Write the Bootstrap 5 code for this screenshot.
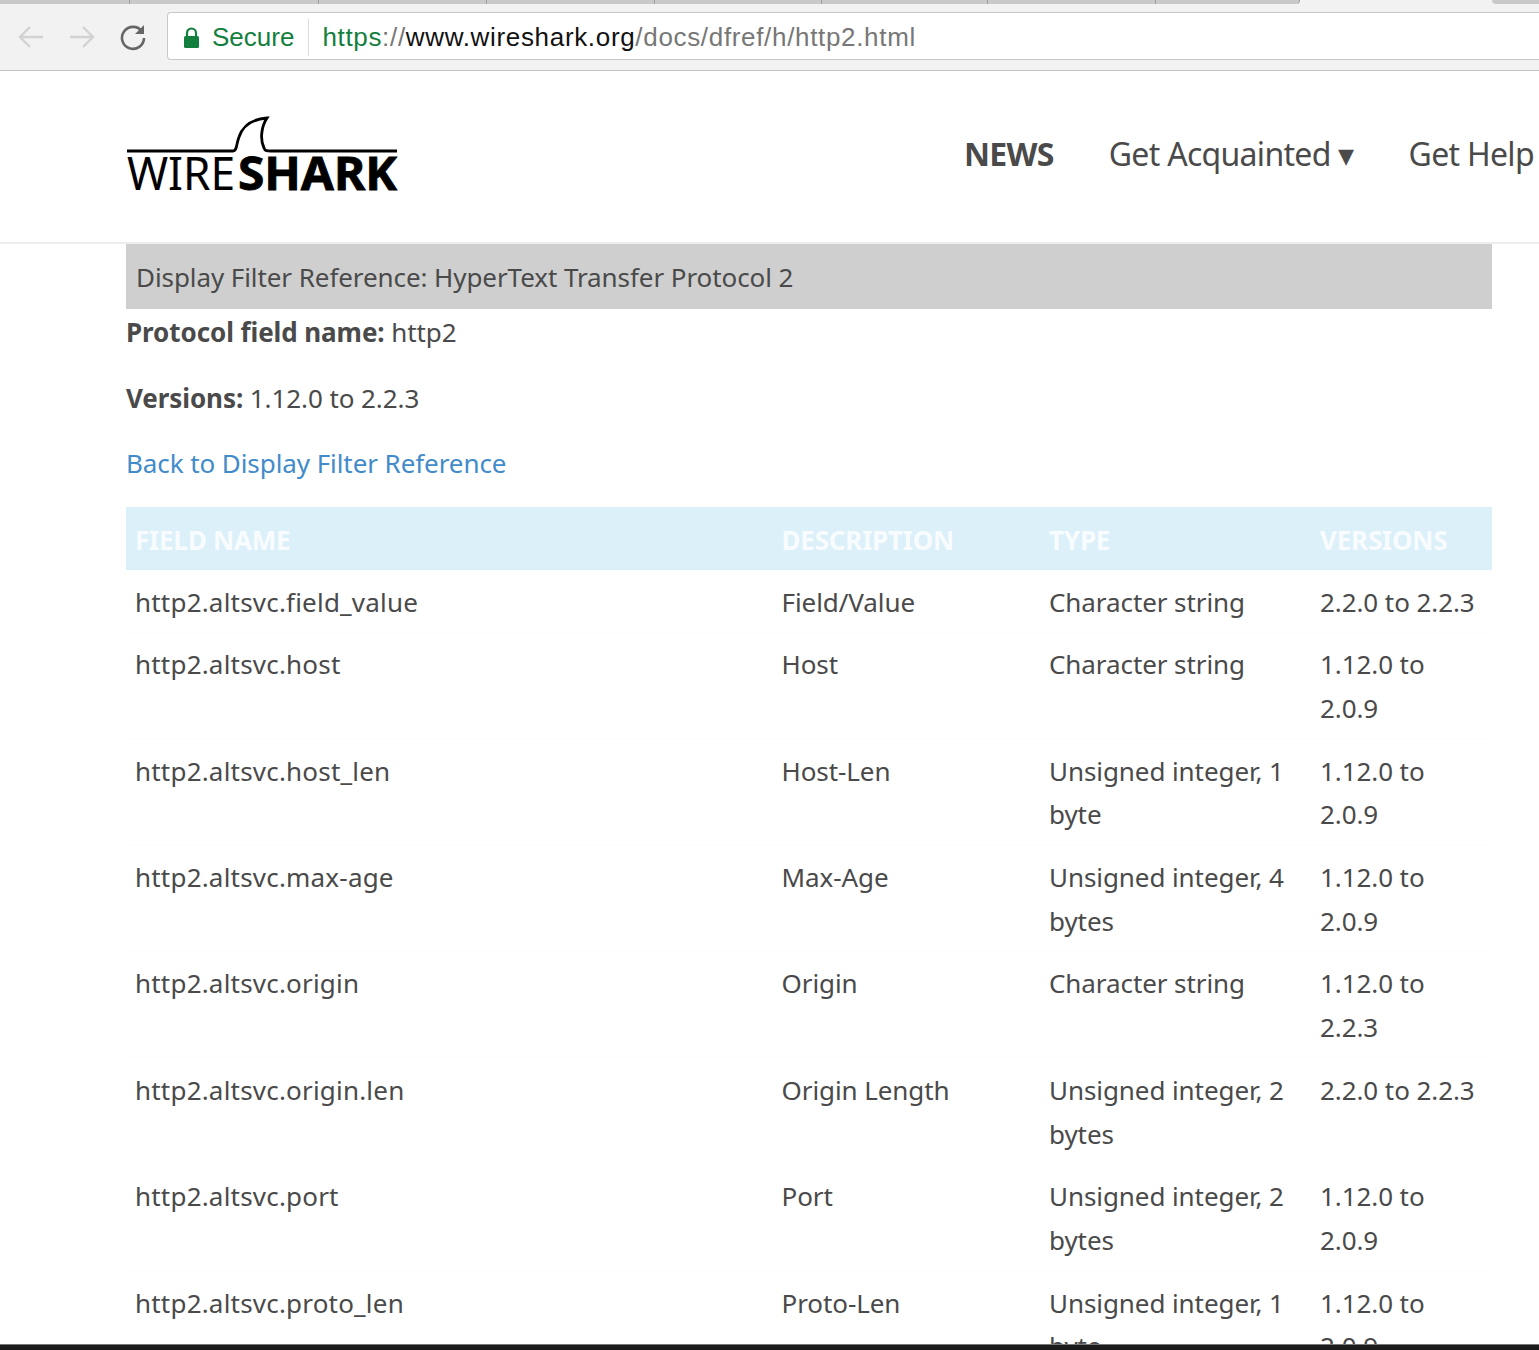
<!doctype html>
<html lang="en"><head><meta charset="utf-8"><title>Wireshark</title>
<link href="https://cdn.jsdelivr.net/npm/bootstrap@5.3.0/dist/css/bootstrap.min.css" rel="stylesheet">
<style>
html,body{height:1350px;overflow:hidden}
body{font-family:"Noto Sans","Open Sans",sans-serif;color:#4a4a4a;background:#fff;font-size:26px;letter-spacing:-.08px;position:relative}
.tabstrip{height:12px;background:#f2f2f2}
.tabitem{height:4px;background:#c9c9c9;border-right:1px solid #9c9c9c}
.t1{width:130px}.t2{width:189px}.t3{width:168px}.t4{width:168px}.t5{width:167px}.t6{width:166px}.t7{width:168px}.t8{width:144px;border-radius:0 0 5px 0}.t9{width:192px;background:#f2f2f2;border:0}.t10{width:47px;border:0;border-radius:0 0 0 5px}
.toolbar{height:59px;background:#f2f2f2;border-bottom:1px solid #c4c4c4;font-family:"Liberation Sans",sans-serif;letter-spacing:0}
.navicons{width:167px;padding:0 0 9px 17px;gap:23px}
.addr{height:48px;background:#fff;border:1px solid #c8c8c8;border-right:0;border-radius:4px 0 0 4px;font-size:26px;padding:3px 0 0 15px}
.secure{color:#137f3e;padding-right:14px;border-right:1px solid #ddd;height:37px;gap:12px}
.urltext{padding-left:13px;color:#777;letter-spacing:.67px}
.urlg{color:#137f3e}.urlb{color:#111}
.sitehead{height:173px;border-bottom:2px solid #ededed;padding-left:126px}
.logo{width:276px;height:90px;margin-top:44px}
.sitenav{margin-left:562px;margin-top:59px;gap:55px;font-size:32px;white-space:nowrap;height:48px;line-height:48px;letter-spacing:-.7px}
.sitenav a{color:#4a4a4a;text-decoration:none}
.sitenav .nw{font-weight:700}
.main{padding:0 47px 0 126px}
.titlebar{height:65px;background:#cfcfcf;padding:0 10px;line-height:67px;letter-spacing:-.08px}
.fieldline{margin:0;height:66px;line-height:47px}
.fieldline a{color:#428bca;text-decoration:none}
.linkline{line-height:45px}
.filtertable{table-layout:fixed;width:1366px;margin:0;--bs-table-color:#4a4a4a;--bs-table-bg:transparent}
.filtertable th,.filtertable td{padding:10.5px 9px 7.5px;line-height:43.7px;border-bottom:1px solid #fcfdfa;vertical-align:top}
.filtertable thead th{background:#dcf0f9;color:#f8fcfe;font-weight:700;text-transform:uppercase;height:63px;border:0;padding-top:12px;padding-bottom:7px;letter-spacing:-.2px}
.filtertable td.fname{letter-spacing:.2px}
.c1{width:646.5px}.c2{width:267.5px}.c3{width:271px}.c4{width:181px}
.bottomstrip{position:absolute;left:0;right:0;top:1344px;height:6px;background:#1c1c1c;border-top:1px solid #777}
</style></head><body>
<div class="tabstrip d-flex">
<div class="tabitem t1"></div><div class="tabitem t2"></div><div class="tabitem t3"></div><div class="tabitem t4"></div><div class="tabitem t5"></div><div class="tabitem t6"></div><div class="tabitem t7"></div><div class="tabitem t8"></div><div class="tabitem t9"></div><div class="tabitem t10"></div>
</div>
<div class="toolbar d-flex">
<div class="navicons d-flex align-items-center">
<svg width="28" height="26" viewBox="0 0 28 26" fill="none" stroke="#d2d2d2" stroke-width="2.4"><path d="M26 13H3M13 3 3 13l10 10"/></svg>
<svg width="28" height="26" viewBox="0 0 28 26" fill="none" stroke="#d2d2d2" stroke-width="2.4"><path d="M2 13h23M15 3l10 10-10 10"/></svg>
<svg width="28" height="28" viewBox="0 0 28 28" fill="none" stroke="#666" stroke-width="2.6"><path d="M23 8.500A11 11 0 1 0 25 15"/><path d="M25 2v9h-9" fill="#666" stroke="none"/></svg>
</div>
<div class="addr flex-grow-1 d-flex align-items-center">
<div class="secure d-flex align-items-center">
<svg width="17" height="22" viewBox="0 0 17 22"><path d="M4 9V6a4.500 4.500 0 0 1 9 0v3" fill="none" stroke="#137f3e" stroke-width="2.200"/><rect x="1" y="9" width="15" height="12" rx="1.500" fill="#137f3e"/></svg>
<span>Secure</span></div>
<div class="urltext"><span class="urlg">https</span>://<span class="urlb">www.wireshark.org</span>/docs/dfref/h/http2.html</div>
</div>
</div>
<header class="sitehead d-flex">
<svg class="logo flex-shrink-0" viewBox="0 0 276 90">
<path d="M1 36H107C111 36 110 30 113 22 117 10 128 4 141 3 135 12 134 25 138 33 139 36 141 36 145 36H271" fill="none" stroke="#000" stroke-width="2.800"/>
<text x="1" y="75" font-family="Noto Sans" font-size="46" textLength="108" lengthAdjust="spacingAndGlyphs" fill="#000">WIRE</text>
<text x="112" y="75" font-family="Noto Sans" font-weight="700" font-size="46" textLength="159" lengthAdjust="spacingAndGlyphs" fill="#000" stroke="#000" stroke-width=".8">SHARK</text>
</svg>
<nav class="sitenav d-flex"><a class="nw" href="#">NEWS</a><a href="#">Get Acquainted ▾</a><a href="#">Get Help</a></nav>
</header>
<main class="main">
<div class="titlebar">Display Filter Reference: HyperText Transfer Protocol 2</div>
<p class="fieldline"><b>Protocol field name:</b> http2</p>
<p class="fieldline"><b>Versions:</b> 1.12.0 to 2.2.3</p>
<p class="fieldline linkline"><a href="#">Back to Display Filter Reference</a></p>
<table class="table filtertable">
<thead><tr><th class="c1">Field Name</th><th class="c2">Description</th><th class="c3">Type</th><th class="c4">Versions</th></tr></thead>
<tbody>
<tr><td class="fname">http2.altsvc.field_value</td><td>Field/Value</td><td>Character string</td><td>2.2.0 to 2.2.3</td></tr>
<tr><td class="fname">http2.altsvc.host</td><td>Host</td><td>Character string</td><td>1.12.0 to 2.0.9</td></tr>
<tr><td class="fname">http2.altsvc.host_len</td><td>Host-Len</td><td>Unsigned integer, 1 byte</td><td>1.12.0 to 2.0.9</td></tr>
<tr><td class="fname">http2.altsvc.max-age</td><td>Max-Age</td><td>Unsigned integer, 4 bytes</td><td>1.12.0 to 2.0.9</td></tr>
<tr><td class="fname">http2.altsvc.origin</td><td>Origin</td><td>Character string</td><td>1.12.0 to 2.2.3</td></tr>
<tr><td class="fname">http2.altsvc.origin.len</td><td>Origin Length</td><td>Unsigned integer, 2 bytes</td><td>2.2.0 to 2.2.3</td></tr>
<tr><td class="fname">http2.altsvc.port</td><td>Port</td><td>Unsigned integer, 2 bytes</td><td>1.12.0 to 2.0.9</td></tr>
<tr><td class="fname">http2.altsvc.proto_len</td><td>Proto-Len</td><td>Unsigned integer, 1 byte</td><td>1.12.0 to 2.0.9</td></tr>
</tbody></table>
</main>
<div class="bottomstrip"></div>
</body></html>
